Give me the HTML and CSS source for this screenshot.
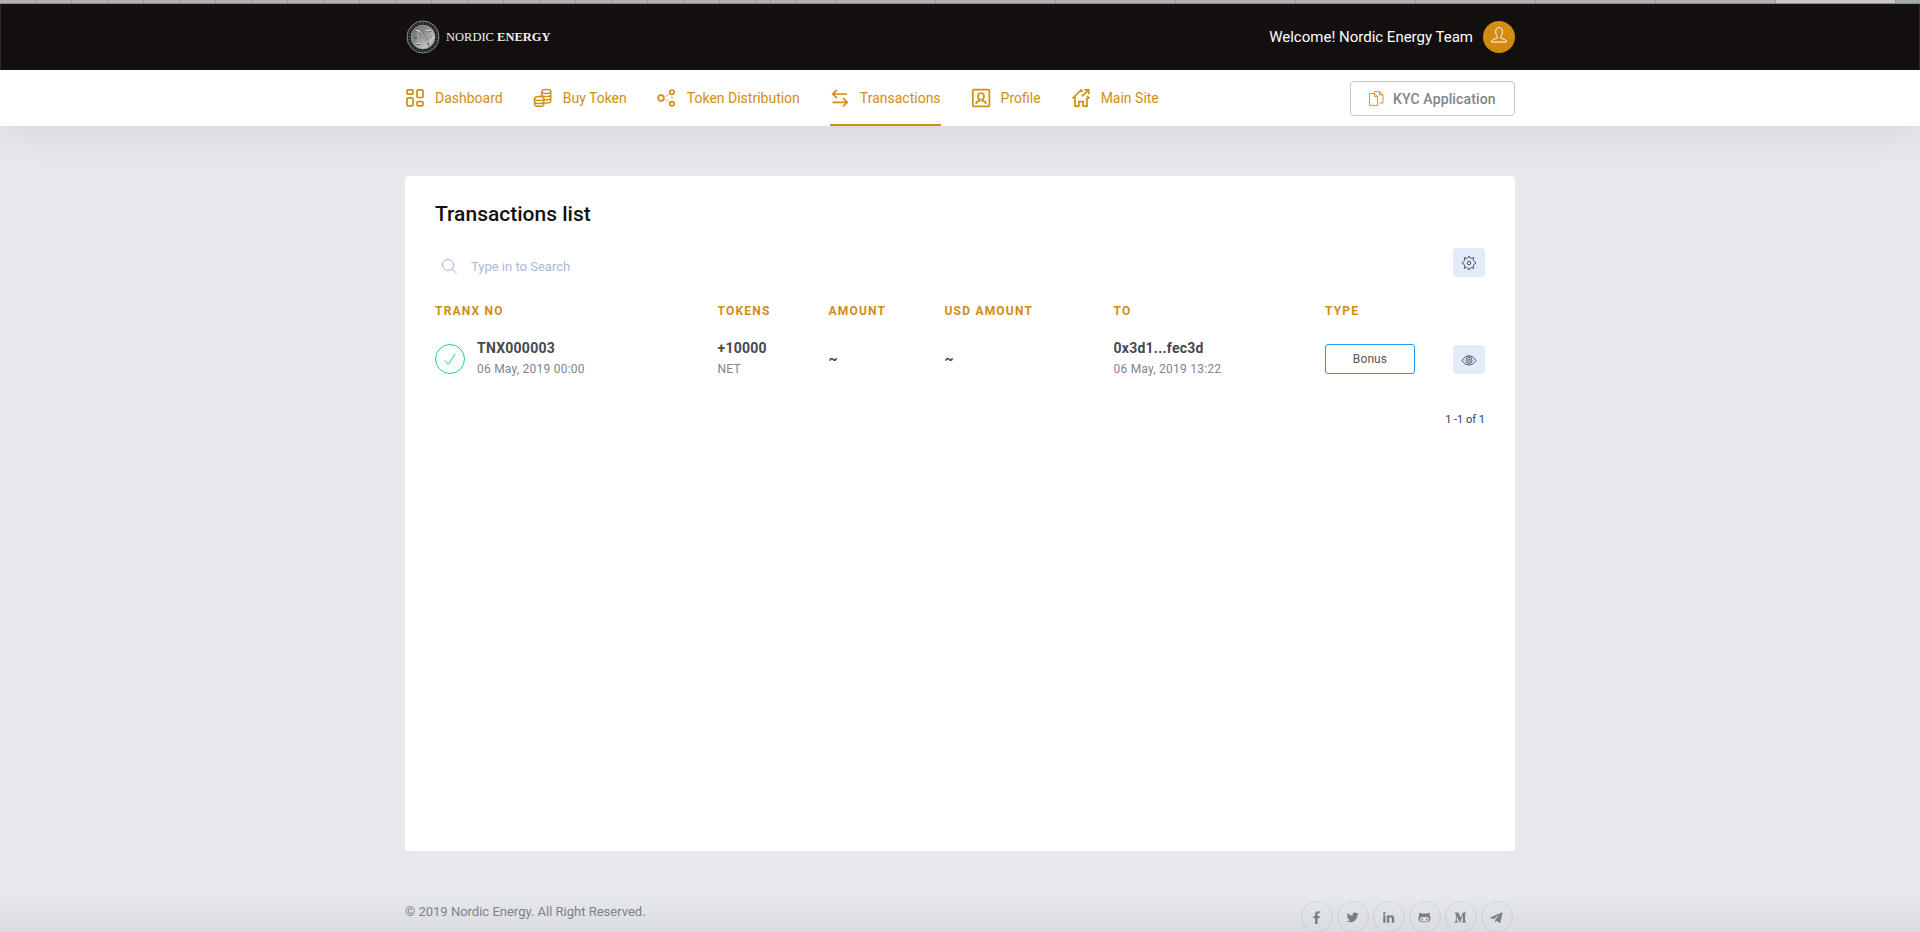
FILE: index.html
```html
<!DOCTYPE html>
<html lang="en">
<head>
<meta charset="utf-8">
<title>Transactions - Nordic Energy</title>
<link rel="stylesheet" href="styles.css">
</head>
<body>
<div class="strip">
  <i class="tab"></i><i class="tab"></i><i class="tab"></i><i class="tab"></i><i class="tab"></i><i class="tab"></i><i class="tab"></i><i class="tab"></i><i class="tab"></i><i class="tab"></i><i class="tab"></i><i class="tab"></i><i class="tab"></i><i class="tab"></i><i class="tab"></i><i class="tab"></i><i class="tab"></i><i class="tab"></i><i class="tab"></i><i class="tab"></i><i class="tab"></i>
  <i class="tab tab-15"></i><i class="tab tab-25"></i><i class="tab tab-41"></i><i class="tab tab-99"></i>
  <i class="tab tab-wide"></i><i class="tab tab-wide"></i><i class="tab tab-wide"></i><i class="tab tab-wide"></i><i class="tab tab-wide"></i><i class="tab tab-wide"></i><i class="tab tab-wide"></i><i class="tab tab-wide tab-active"></i><i class="tab tab-end"></i>
</div>
<header class="topbar">
  <div class="container topbar-inner">
    <a class="brand">
      <svg class="coin" width="34" height="34" viewBox="0 0 34 34">
        <defs><linearGradient id="metal" x1="0" y1="0" x2="1" y2="1"><stop offset="0" stop-color="#666"/><stop offset=".4" stop-color="#8d8d8d"/><stop offset=".75" stop-color="#c4c4c4"/><stop offset="1" stop-color="#777"/></linearGradient></defs>
        <circle cx="17" cy="17" r="16" fill="#181b1c" stroke="#8b9091" stroke-width="1"/>
        <circle cx="17" cy="17" r="14" fill="none" stroke="#4b5153" stroke-width="2" stroke-dasharray="1.5 1.6"/>
        <circle cx="17" cy="17" r="12" fill="url(#metal)" stroke="#a5a8a8" stroke-width=".7"/>
        <path d="M10 24h4M12 24V11h3l7 12V11M20 11h5M22 17h4M10 11h5M8 18h3" fill="none" stroke="#666" stroke-width="2"/>
        <path d="M10 23.500h4M12 23.500V11h2.500l7.500 12V11M20 10.500h5M22 17h4M10 10.500h4" fill="none" stroke="#d0d0d0" stroke-width="1"/>
      </svg>
      <span class="brand-name">NORDIC <b>ENERGY</b></span>
    </a>
    <div class="user">
      <span class="welcome">Welcome! Nordic Energy Team</span>
      <span class="avatar">
        <svg width="16" height="16" viewBox="0 0 16 16" fill="none" stroke="#fff" stroke-width="1"><path d="M6.300 9.600C5.300 8.500 4.700 7 4.700 4.500 4.700 2 6 .5 8 .5s3.300 1.500 3.300 4c0 2.500-.6 4-1.600 5.100v1.300l4.200 1.700c.9.400 1.400 1.100 1.500 2.400H.6c.1-1.300.6-2 1.500-2.400l4.200-1.700z"/></svg>
      </span>
    </div>
  </div>
</header>
<nav class="navbar">
  <div class="container navbar-inner">
    <a class="nav-item">
      <svg class="ico" viewBox="0 0 20 20"><rect x="2" y="1.900" width="6" height="4.200" rx="1"/><rect x="12" y="1.900" width="6" height="7.600" rx="1"/><rect x="2" y="9.800" width="6" height="8" rx="1"/><rect x="12" y="13.600" width="6" height="4.200" rx="1"/></svg>
      <span>Dashboard</span></a>
    <a class="nav-item">
      <svg class="ico thin" viewBox="0 0 20 20"><ellipse cx="13.200" cy="3.500" rx="4.600" ry="2"/><path d="M8.600 3.500v4.800M17.800 3.500v9.500c0 1.100-2 2-4.600 2l-1.900-.1M8.600 6.500c0 1.200 2 2.100 4.600 2.100s4.600-.9 4.600-2.100M17.800 9.700c0 1.200-2 2.100-4.600 2.100l-1.900-.1"/><ellipse cx="6.200" cy="10.500" rx="4.700" ry="2"/><path d="M1.500 10.500v5.700c0 1.200 2.100 2.100 4.700 2.100s4.700-.9 4.700-2.100v-5.700M1.500 13.400c0 1.200 2.100 2.100 4.700 2.100s4.700-.9 4.700-2.100"/></svg>
      <span>Buy Token</span></a>
    <a class="nav-item">
      <svg class="ico" viewBox="0 0 20 20"><circle cx="4" cy="10" r="2.900"/><circle cx="15" cy="4.200" r="2.200"/><circle cx="15" cy="15.800" r="2.200"/><path d="M8.700 8.300l3.200-2.100M8.700 11.700l3.200 2.100M15 8.500v3" stroke-width="1" stroke-dasharray="2 1"/></svg>
      <span>Token Distribution</span></a>
    <a class="nav-item active">
      <svg class="ico" viewBox="0 0 20 20"><path d="M17 6H3M6.900 1.900L2.800 6l4.100 4.100M2.500 14.300H17M13.100 10.200l4.100 4.100-4.100 4.100"/></svg>
      <span>Transactions</span></a>
    <a class="nav-item">
      <svg class="ico" viewBox="0 0 20 20"><rect x="1.800" y="1.700" width="16.600" height="16.600" rx="1"/><path d="M10 5c-4 0-3.500 5.800-1.200 6.400v1.100c-1.500.4-3.500.8-3.800 3.300M10 5c4 0 3.500 5.800 1.200 6.400v1.100c1.500.4 3.500.8 3.800 3.300"/></svg>
      <span>Profile</span></a>
    <a class="nav-item">
      <svg class="ico" viewBox="0 0 20 20"><path d="M1.500 10.500L10 2l1.600 1.600M4 9v9.200h3.800v-4.500h4.400v4.500H16V9.800M16 8l2.400 2.400M10.800 8.400L17.500 2M13.400 1.900h4.400v4.400"/></svg>
      <span>Main Site</span></a>
    <a class="kyc">
      <svg width="15" height="15" viewBox="0 0 15 15" fill="none" stroke="#d9972a" stroke-width="1"><path d="M.5 2.500h5l3 3v8.900h-8zM5.500 2.500v3h3M5.500 2.500V.5h5l3.500 3.500v8h-3.500M10.500.5V4H14"/></svg>
      <span>KYC Application</span></a>
  </div>
</nav>
<main class="container card">
  <h4 class="title">Transactions list</h4>
  <div class="tools">
    <label class="search">
      <svg width="15" height="15" viewBox="0 0 15 15" fill="none" stroke="#a3b5dc" stroke-width="1"><circle cx="6" cy="6" r="5.500"/><path d="M10 10l4.700 4.500"/></svg>
      <span>Type in to Search</span>
    </label>
    <a class="square">
      <svg width="16" height="16" viewBox="0 0 16 16" fill="none" stroke="#495463" stroke-width="1" stroke-linejoin="round"><circle cx="8" cy="8" r="1.800"/><path d="M7.100 2.700L8 1l.9 1.700 1.600.7 2.200-.9-.5 2.300.9 1.600L15 8l-1.900 1.300-.9 1.700.5 2.300-2.200-.8-1.600.8L8 15l-.9-1.700-1.600-.8-2.200.8.500-2.300-.9-1.700L1 8l1.900-1.600.9-1.600-.5-2.300 2.200.9z"/></svg>
    </a>
  </div>
  <div class="row head"><span>TRANX NO</span><span>TOKENS</span><span>AMOUNT</span><span>USD AMOUNT</span><span>TO</span><span>TYPE</span></div>
  <div class="row data">
    <div class="tranx">
      <span class="status"><svg width="12" height="12" viewBox="0 0 12 12" fill="none" stroke="#1fcf85" stroke-width="1"><path d="M.7 7.500l3.800 3.700L11.300.8"/></svg></span>
      <div><div class="lead">TNX000003</div><div class="sub">06 May, 2019 00:00</div></div>
    </div>
    <div><div class="lead">+10000</div><div class="sub">NET</div></div>
    <div class="lead tilde">~</div>
    <div class="lead tilde">~</div>
    <div><div class="lead">0x3d1...fec3d</div><div class="sub">06 May, 2019 13:22</div></div>
    <div class="type"><span class="badge">Bonus</span>
      <a class="square"><svg width="16" height="16" viewBox="0 0 16 16" fill="none" stroke="#495463" stroke-width="1"><path d="M1 8.500C3 5.500 5.300 3.800 8 3.800s5 1.700 7 4.700c-2 3-4.300 4.400-7 4.400S3 11.500 1 8.500z"/><circle cx="8" cy="8.300" r="3"/><circle cx="8" cy="8.300" r="1.100"/></svg></a>
    </div>
  </div>
  <div class="pager">1 -1 of 1</div>
</main>
<footer class="container footer">
  <span class="copy">© 2019 Nordic Energy. All Right Reserved.</span>
  <div class="social">
    <a><svg viewBox="0 0 14 14"><path d="M5.500 14V7.800H3.600V5.300h1.900V3.600C5.500 1.400 6.700.2 8.700.2c.9 0 1.700.1 1.900.1v2.200H9.300c-1 0-1.200.5-1.200 1.200v1.600h2.400l-.4 2.500h-2V14z"/></svg></a>
    <a><svg viewBox="0 0 14 14"><path d="M13.500 2.900c-.4.200-.9.400-1.500.4.500-.3.900-.8 1.100-1.400-.5.300-1 .5-1.600.6A2.650 2.650 0 0 0 7 4.900C4.800 4.800 2.900 3.800 1.500 2.100c-.7 1.200-.3 2.700.8 3.500-.4 0-.8-.1-1.200-.3 0 1.300.9 2.300 2.100 2.600-.4.100-.8.100-1.200 0 .3 1 1.300 1.800 2.500 1.800-1.100.9-2.500 1.300-3.900 1.100 1.200.8 2.600 1.200 4.100 1.200 5 0 7.700-4.100 7.600-7.800.5-.3.900-.8 1.200-1.300z"/></svg></a>
    <a><svg viewBox="0 0 14 14"><path d="M1.300 4.700h2.500v7.900H1.300zM2.500 1a1.400 1.400 0 1 1 0 2.800 1.400 1.400 0 0 1 0-2.800zM5.300 4.700h2.400v1.100c.5-.8 1.300-1.300 2.400-1.300 2.500 0 3 1.600 3 3.800v4.300h-2.500V8.800c0-1 0-2.100-1.300-2.100s-1.500 1-1.500 2v3.900H5.300z"/></svg></a>
    <a><svg viewBox="0 0 14 14"><path fill-rule="evenodd" d="M1.500 1.800c1.200 0 2.300.6 3 1.200 1.600-.3 3.400-.3 5 0 .7-.6 1.800-1.200 3-1.200.4 1 .4 2 .1 2.800 1 1.200 1 3 .6 4.700-.5 2-2.400 2.800-6.200 2.800S1.300 11.300.8 9.300C.4 7.600.4 5.800 1.400 4.600c-.3-.8-.3-1.800.1-2.800zM3.500 6.800C1.700 7 1.800 11 4 11.200h6c2.200-.2 2.300-4.200.5-4.400-2-.3-5-.3-7 0zM4.600 7.800c.5 0 .8.600.8 1.200s-.3 1.200-.8 1.200-.8-.6-.8-1.200.3-1.200.8-1.200zM9.400 7.800c.5 0 .8.600.8 1.200s-.3 1.200-.8 1.200-.8-.6-.8-1.200.3-1.200.8-1.200z"/></svg></a>
    <a><svg viewBox="0 0 14 14"><path d="M1 1.600h3.800l2.500 5.800 2.300-5.800H13v.7l-1.100 1v7.400l1.100 1v.7H8.400v-.7l1.100-1V4.500l-3 7.900H6L2.900 5.100v5l1.300 1.600v.7H.8v-.7l1.200-1.600V3.500L1 2.300z"/></svg></a>
    <a><svg viewBox="0 0 14 14"><path d="M13.300 1.400L.8 6.800c-.5.200-.4.700 0 .9l3 .9 6.600-4.500-4.900 5.200v3l1.700-1.800 3 2.200c.5.300.9.200 1-.4l2.200-9.800c.1-.7-.1-1.200-.1-1.100z"/></svg></a>
  </div>
</footer>
<div class="bottom-shade"></div>
</body>
</html>
```
FILE: styles.css
```css
* { box-sizing: border-box; }
body { margin: 0; height: 932px; overflow: hidden; background: #e6e8ec; font-family: Roboto, "Liberation Sans", sans-serif; position: relative; }
svg { display: block; flex: none; }
.container { width: 1110px; margin: 0 auto; }

.strip { display: flex; height: 4px; background: #b2b4b2; border-bottom: 1px solid #8d8b8b; }
.tab { flex: none; width: 36px; border-right: 1px solid #969896; }
.tab-15 { width: 15px; }
.tab-25 { width: 25px; }
.tab-41 { width: 41px; }
.tab-99 { width: 99px; }
.tab-wide { width: 120px; }
.tab-active { background: #c8cac8; }
.tab-end { width: 25px; border: 0; background: #a6aaa8; }

.topbar { height: 66px; background: #14100f; border-left: 1px solid #2b2928; border-right: 1px solid #2b2928; }
.topbar-inner { height: 66px; display: flex; align-items: center; justify-content: space-between; }
.brand { display: flex; align-items: center; gap: 6px; padding-left: 1px; }
.brand-name { font: 12.500px "Liberation Serif", serif; color: #f2f2f2; white-space: nowrap; }
.user { display: flex; align-items: center; gap: 10px; }
.welcome { color: #fff; font-size: 15px; }
.avatar { width: 32px; height: 32px; border-radius: 50%; background: #d38d13; display: flex; justify-content: center; padding-top: 6px; }

.navbar { position: relative; height: 56px; background: #fff; box-shadow: 0 0 45px rgba(0, 0, 20, .1); }
.navbar-inner { height: 56px; display: flex; gap: 30px; }
.nav-item { display: flex; align-items: center; gap: 10px; height: 56px; color: #d38d13; font-size: 14px; border-bottom: 2px solid transparent; padding-top: 2px; white-space: nowrap; }
.nav-item.active { border-bottom-color: #d38d13; }
.ico { width: 20px; height: 20px; fill: none; stroke: #d38d13; stroke-width: 1.700; }
.ico.thin { stroke-width: 1.400; }
.kyc { margin: 11px 0 0 auto; width: 165px; height: 35px; border: 1px solid #c6c8cb; border-radius: 4px; display: flex; align-items: center; gap: 9px; padding-left: 18px; color: #7e858d; font-size: 14px; font-weight: 500; letter-spacing: .13px; }

.card { margin-top: 50px; height: 675px; background: #fff; border-radius: 4px; padding: 25px 30px 0; }
.title { margin: 0; font-size: 21px; line-height: 26px; font-weight: 500; color: #14100f; }
.tools { display: flex; justify-content: space-between; margin-top: 21px; height: 29px; }
.search { display: flex; align-items: center; gap: 14px; padding: 8px 0 0 7px; color: #a9b9dc; font-size: 13px; }
.search svg { margin-top: -1px; }
.square { width: 32px; height: 29px; border-radius: 4px; background: #e2ebf9; display: flex; align-items: center; justify-content: center; }

.row { display: grid; grid-template-columns: 282.500px 111px 116px 169px 211.500px 160px; }
.head { margin-top: 26px; font-size: 12px; line-height: 16px; font-weight: 700; letter-spacing: 1.200px; color: #d38d13; }
.data { margin-top: 19px; height: 44px; }
.tranx { display: flex; gap: 12px; }
.status { width: 30px; height: 30px; margin-top: 6px; border: 1px solid #1fcf85; border-radius: 50%; display: flex; align-items: center; justify-content: center; }
.lead { font-size: 14px; line-height: 21px; font-weight: 700; color: #47484d; letter-spacing: .25px; }
.sub { font-size: 12px; line-height: 21px; color: #7e858d; letter-spacing: .23px; }
.tilde { line-height: 42px; }
.type { display: flex; justify-content: space-between; padding-top: 6px; }
.type .square { margin-top: 1px; }
.badge { width: 90px; height: 30px; border: 1px solid #1c9cf5; border-radius: 3px; text-align: center; font-size: 12px; line-height: 28px; color: #55575c; letter-spacing: .1px; }
.pager { margin-top: 30px; text-align: right; font-size: 11px; line-height: 16px; color: #253d6c; }

.footer { display: flex; justify-content: space-between; padding-top: 50px; height: 81px; overflow: hidden; }
.copy { font-size: 13px; line-height: 22px; color: #7e858d; }
.social { display: flex; gap: 4px; padding-right: 2px; }
.social a { width: 32px; height: 32px; flex: none; border: 1px solid #ccd7e5; border-radius: 50%; display: flex; align-items: center; justify-content: center; }
.social svg { width: 13px; height: 13px; fill: #7c838b; margin-left: -1px; }
.bottom-shade { position: absolute; left: 0; right: 0; bottom: 0; height: 35px; background: linear-gradient(rgba(0, 0, 0, 0), rgba(0, 0, 0, .055)); }
```
